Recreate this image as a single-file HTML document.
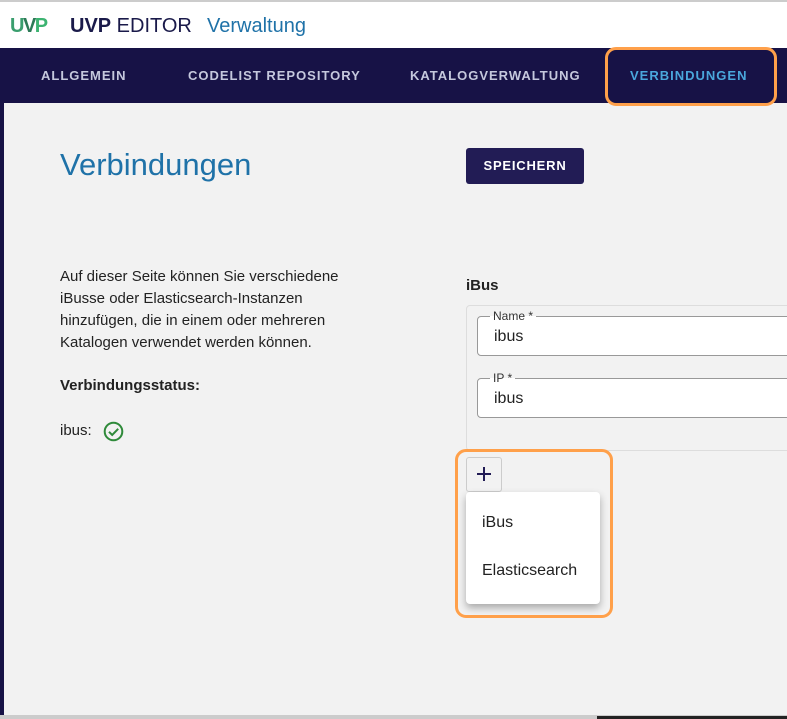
<!DOCTYPE html>
<html><head><meta charset="utf-8"><style>
*{box-sizing:border-box;margin:0;padding:0}
body{width:787px;height:719px;overflow:hidden;background:#f2f2f2;font-family:"Liberation Sans",sans-serif;position:relative;color:#222}
.top{position:absolute;left:0;top:0;width:787px;height:48px;background:#fff;border-top:2px solid #ccc}
.logo{position:absolute;left:10px;top:15px;font-weight:bold;font-size:20px;letter-spacing:-1.5px;color:#2e9a6a}
.title{position:absolute;left:70px;top:15px;font-size:20px;color:#1a1a4a}
.verw{position:absolute;left:207px;top:15px;font-size:20px;color:#1f72a8}
.nav{position:absolute;left:0;top:48px;width:787px;height:55px;background:#171246}
.nav span{position:absolute;top:20px;font-size:13px;font-weight:bold;letter-spacing:1px;color:#c5c8dd}
.side{position:absolute;left:0;top:103px;width:4px;height:612px;background:#171246}
.hl{position:absolute;border:3px solid #ffa04a;border-radius:11px}
h1{position:absolute;left:60px;top:147px;font-size:31px;font-weight:normal;color:#1f72a8}
.btn{position:absolute;left:466px;top:148px;width:118px;height:36px;background:#221c55;color:#fff;font-size:13px;font-weight:bold;letter-spacing:.8px;text-align:center;line-height:36px;border-radius:3px}
.txt{position:absolute;left:60px;top:266px;width:360px;font-size:15px;line-height:22px;color:#222}
.field{position:absolute;left:477px;width:320px;height:40px;border:1px solid #999;border-radius:4px;background:#fff}
.field label{position:absolute;left:12px;top:-8px;font-size:12px;background:linear-gradient(#f2f2f2 50%,#fff 50%);padding:0 3px;color:#333}
.field div{position:absolute;left:16px;top:11px;font-size:16px}
</style></head><body>
<div class="top"></div>
<div class="logo"><span style="color:#3a9e6e">U</span><span style="color:#2c7a56">V</span><span style="color:#3cb371">P</span></div>
<div class="title"><b>UVP</b> EDITOR</div>
<div class="verw">Verwaltung</div>
<div class="nav">
<span style="left:41px">ALLGEMEIN</span>
<span style="left:188px">CODELIST REPOSITORY</span>
<span style="left:410px">KATALOGVERWALTUNG</span>
<span style="left:630px;color:#4aa7dc">VERBINDUNGEN</span>
</div>
<div class="side"></div>
<div class="hl" style="left:605px;top:47px;width:172px;height:59px"></div>
<h1>Verbindungen</h1>
<div class="btn">SPEICHERN</div>
<div class="txt">Auf dieser Seite können Sie verschiedene<br>iBusse oder Elasticsearch-Instanzen<br>hinzufügen, die in einem oder mehreren<br>Katalogen verwendet werden können.</div>
<div style="position:absolute;left:60px;top:377px;font-size:15px;font-weight:bold">Verbindungsstatus:</div>
<div style="position:absolute;left:60px;top:422px;font-size:15px">ibus:</div>
<svg style="position:absolute;left:103px;top:421px" width="21" height="21" viewBox="0 0 21 21"><circle cx="10.5" cy="10.5" r="8.8" fill="none" stroke="#2f8a3a" stroke-width="2"/><path d="M6 10.8l3.2 3.2 6-6.2" fill="none" stroke="#2f8a3a" stroke-width="2"/></svg>
<div style="position:absolute;left:466px;top:277px;font-size:15px;font-weight:bold">iBus</div>
<div style="position:absolute;left:466px;top:305px;width:340px;height:146px;border:1px solid #ddd;border-radius:4px"></div>
<div class="field" style="top:316px"><label>Name *</label><div>ibus</div></div>
<div class="field" style="top:378px"><label>IP *</label><div>ibus</div></div>
<div style="position:absolute;left:466px;top:457px;width:36px;height:35px;border:1px solid #ccc;border-radius:3px"></div>
<svg style="position:absolute;left:474px;top:464px" width="20" height="20" viewBox="0 0 20 20"><path d="M10 3v14M3 10h14" stroke="#221c55" stroke-width="2"/></svg>
<div style="position:absolute;left:466px;top:492px;width:134px;height:112px;background:#fff;border-radius:4px;box-shadow:0 4px 8px rgba(0,0,0,.3)">
<div style="position:absolute;left:16px;top:22px;font-size:16px">iBus</div>
<div style="position:absolute;left:16px;top:70px;font-size:16px">Elasticsearch</div>
</div>
<div class="hl" style="left:455px;top:449px;width:158px;height:169px"></div>
<div style="position:absolute;left:0;top:715px;width:787px;height:4px;background:#ccc"></div>
<div style="position:absolute;left:597px;top:716px;width:190px;height:3px;background:#222"></div>
</body></html>
